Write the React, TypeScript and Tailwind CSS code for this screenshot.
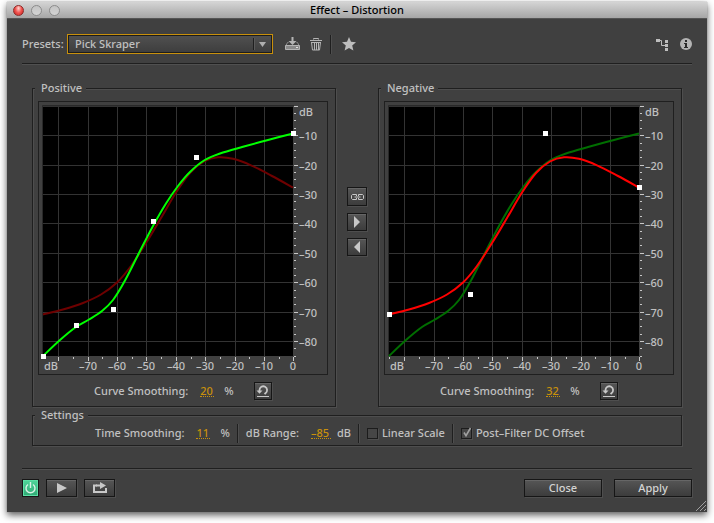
import React, { useState } from "react";

type Point = [number, number];

const PLOT = 250;
const RANGE = 85;

// curve samples and handles in plot units, origin at the top left
const GREEN_CURVE: Point[] = [
  [0, 250], [17, 234], [33, 221], [46, 213.5], [59, 205], [70, 194], [82, 174.5], [96, 147], [110, 120],
  [123, 97.5], [135, 80], [147, 66], [161, 54.5], [177, 47.5], [200, 40.8], [225, 34], [250, 27.5],
];
const RED_CURVE: Point[] = [
  [0, 208.5], [20, 203.5], [40, 197], [58, 188.5], [74, 176.5], [88, 160], [103, 137], [118, 112],
  [133, 86.5], [147, 67], [161, 55.5], [175, 51.3], [190, 52.8], [208, 59.3], [229, 70], [250, 81.5],
];
const POSITIVE_HANDLES: Point[] = [[0, 250], [33, 219], [70, 203], [110, 115], [153, 51], [250, 27]];
const NEGATIVE_HANDLES: Point[] = [[0, 208], [81, 188], [156, 27], [250, 81]];

const TENS = [10, 20, 30, 40, 50, 60, 70, 80];

const scale = (db: number) => (db * PLOT) / RANGE;
const xFor = (db: number) => Math.ceil(PLOT - scale(db));
const yFor = (db: number) => Math.floor(scale(db) + 0.25);

const smoothPath = (points: Point[]) => {
  let d = `M${points[0][0]} ${points[0][1]}`;
  for (let i = 0; i < points.length - 1; i++) {
    const p0 = points[i - 1] || points[i];
    const p1 = points[i];
    const p2 = points[i + 1];
    const p3 = points[i + 2] || p2;
    d += ` C${p1[0] + (p2[0] - p0[0]) / 6} ${p1[1] + (p2[1] - p0[1]) / 6} ${p2[0] - (p3[0] - p1[0]) / 6} ${
      p2[1] - (p3[1] - p1[1]) / 6
    } ${p2[0]} ${p2[1]}`;
  }
  return d;
};

interface CurveGraphProps {
  label: string;
  back: Point[];
  backColor: string;
  front: Point[];
  frontColor: string;
  handles: Point[];
}

const CurveGraph: React.FC<CurveGraphProps> = ({ label, back, backColor, front, frontColor, handles }) => {
  const yTicks = Array.from({ length: 35 }, (_, i) => i);
  const xTicks = Array.from({ length: 18 }, (_, i) => i);
  return (
    <svg viewBox="0 0 288 272" className="block w-full" role="img" aria-label={label}>
      <path d="M3.5 254V3.5H255" fill="none" stroke="#292929" />
      <g transform="translate(4 4)">
        <rect width={PLOT} height={PLOT} fill="#000" />
        <g stroke="#333" shapeRendering="crispEdges">
          <path d="M0 .5H250" />
          {TENS.map((t) => (
            <path key={t} d={`M${xFor(t) + 0.5} 0V250M0 ${yFor(t) + 0.5}H250`} />
          ))}
        </g>
        <g stroke="#c8c8c8" shapeRendering="crispEdges">
          {yTicks.map((i) => (
            <path key={i} d={`M251 ${yFor(i * 2.5) + 0.5}h${i % 4 ? 2 : 4}`} />
          ))}
          {xTicks.map((i) => (
            <path key={i} d={`M${xFor(i * 5) + 0.5} 251v${i % 2 ? 2 : 4}`} />
          ))}
        </g>
        <g fill="none" strokeWidth="2">
          <path d={smoothPath(back)} stroke={backColor} />
          <path d={smoothPath(front)} stroke={frontColor} />
        </g>
        <g fill="#fff" shapeRendering="crispEdges">
          {handles.map(([x, y]) => (
            <rect key={`${x}-${y}`} x={x - 2} y={y - 2} width="5" height="5" />
          ))}
        </g>
        <g fill="#c0c0c0" fontSize="11">
          <text x="256" y="10">dB</text>
          <text x="1" y="264">dB</text>
          <text x="250" y="264" textAnchor="middle">0</text>
          {TENS.map((t) => (
            <text key={t} x="256" y={yFor(t) + 5}>–{t}</text>
          ))}
          {TENS.slice(0, 7).map((t) => (
            <text key={t} x={xFor(t)} y="264" textAnchor="middle">–{t}</text>
          ))}
        </g>
      </g>
    </svg>
  );
};

const FRAME = "border border-[#1f1f1f] shadow-[1px_1px_0_#4e4e4e,inset_1px_1px_0_#4e4e4e]";
const LEGEND = "bg-[#404040] pr-1 pl-1.5 leading-[14px]";
const BUTTON =
  "flex items-center justify-center border border-[#161616] bg-linear-to-b from-[#565656] to-[#3c3c3c] shadow-[1px_1px_0_#4e4e4e,inset_0_1px_0_#666]";

interface ValueFieldProps {
  label: string;
  unit: string;
  initial: string;
  width: string;
}

const ValueField: React.FC<ValueFieldProps> = ({ label, unit, initial, width }) => {
  const [value, setValue] = useState(initial);
  return (
    <label className="flex items-center whitespace-nowrap">
      {label}
      <input
        type="text"
        className={`ml-3 h-3 border-b border-dotted border-[#c8900c] bg-transparent text-[#c8900c] outline-none ${width}`}
        value={value}
        onChange={(e) => setValue(e.target.value)}
      />
      <span className={unit === "%" ? "ml-2.5" : "ml-1.5"}>{unit}</span>
    </label>
  );
};

const CurvePanel: React.FC<CurveGraphProps & { smoothing: string }> = ({ smoothing, ...graph }) => (
  <fieldset className={`min-w-0 flex-1 pt-1.5 pr-[7px] pb-1.5 pl-[5px] ${FRAME}`}>
    <legend className={`-ml-[3px] ${LEGEND}`}>{graph.label}</legend>
    <div className="border border-[#1f1f1f]">
      <CurveGraph {...graph} />
    </div>
    <div className="mt-[7px] flex h-[18px] items-center justify-between pr-14 pl-14">
      <ValueField label="Curve Smoothing:" unit="%" initial={smoothing} width="w-3.5" />
      <button type="button" aria-label="Reset curve" className={`h-[18px] w-[18px] ${BUTTON}`}>
        <svg width="14" height="14" viewBox="0 0 14 14" fill="none" stroke="#c8c8c8">
          <path d="M3.5 7V6a3.8 3.8 0 1 1 6 3.2L8.5 10" strokeWidth="1.8" />
          <path d="M.5 6.5h6l-3 3.2z" fill="#c8c8c8" stroke="none" />
          <path d="M1 12.5h12" />
        </svg>
      </button>
    </div>
  </fieldset>
);

const CheckField: React.FC<{ label: string; initial: boolean }> = ({ label, initial }) => {
  const [checked, setChecked] = useState(initial);
  return (
    <label className="flex items-center gap-1 whitespace-nowrap">
      <span className="grid">
        <input
          type="checkbox"
          className="col-start-1 row-start-1 h-[11px] w-[11px] appearance-none border border-[#1c1c1c] bg-[#464646] shadow-[1px_1px_0_#4e4e4e]"
          checked={checked}
          onChange={(e) => setChecked(e.target.checked)}
        />
        {checked && (
          <svg width="11" height="11" viewBox="0 0 11 11" overflow="visible" className="pointer-events-none col-start-1 row-start-1">
            <path d="M3 4.5l2 3.2L9.5 0" fill="none" stroke="#a0a0a0" strokeWidth="1.6" />
          </svg>
        )}
      </span>
      {label}
    </label>
  );
};

const Divider = () => <div className="h-[19px] w-0.5 border-r border-l border-r-[#4e4e4e] border-l-[#1f1f1f]" />;

const Rule = () => <div className="h-0.5 border-t border-b border-t-[#1f1f1f] border-b-[#505050]" />;

const App: React.FC = () => {
  const [preset, setPreset] = useState("Pick Skraper");

  return (
    <div className="bg-white px-[7px] pt-0.5 pb-[11px] font-['Noto_Sans',sans-serif] text-[11px] leading-[14px] font-medium text-[#c0c0c0]">
      <div className="bg-[#404040] shadow-[0_0_1px_#888,0_3px_7px_rgba(0,0,0,0.65)]">
        <header className="grid h-[17px] grid-cols-[1fr_auto_1fr] items-center border-b border-[#555] bg-linear-to-b from-[#d4d4d4] to-[#a6a6a6] px-1.5">
          <div className="flex gap-[7px]">
            <button
              type="button"
              aria-label="Close window"
              className="h-[11px] w-[11px] rounded-full border border-[#8e2a28] bg-radial-[at_50%_25%] from-[#ffd4cf] via-[#f0524e] to-[#c42320]"
            />
            <button type="button" aria-label="Minimize" className="h-[11px] w-[11px] rounded-full border border-[#8c8c8c] bg-linear-to-b from-[#c4c4c4] to-[#d4d4d4]" />
            <button type="button" aria-label="Zoom" className="h-[11px] w-[11px] rounded-full border border-[#8c8c8c] bg-linear-to-b from-[#c4c4c4] to-[#d4d4d4]" />
          </div>
          <h1 className="text-black">Effect – Distortion</h1>
        </header>

        <main className="px-[15px] pt-[15px] pb-[15px]">
          <div className="flex h-5 items-center">
            <label htmlFor="presets" className="w-[45px]">Presets:</label>
            <div className="grid h-5 w-[206px] items-center border border-[#c8900c]">
              <select
                id="presets"
                className="col-start-1 row-start-1 h-[18px] w-full appearance-none border border-[#1c1c1c] bg-linear-to-b from-[#505050] to-[#3e3e3e] px-1.5 outline-none"
                value={preset}
                onChange={(e) => setPreset(e.target.value)}
              >
                <option>Pick Skraper</option>
              </select>
              <svg width="20" height="12" viewBox="0 0 20 12" className="pointer-events-none col-start-1 row-start-1 justify-self-end">
                <path d="M1.5 0V12" stroke="#1f1f1f" />
                <path d="M2.5 0V12" stroke="#5a5a5a" />
                <path d="M7 4h7l-3.5 5z" fill="#b0b0b0" />
              </svg>
            </div>
            <button type="button" aria-label="Save preset" className="ml-3">
              <svg width="15" height="14" viewBox="0 0 15 14">
                <path d="M6.5 0h2v4h3L7.5 8 3.5 4h3z" fill="#b4b4b4" />
                <path d="M3.5 5.5H2.5L1 8.5M11.5 5.5h1L14 8.5" fill="none" stroke="#8c8c8c" />
                <path d="M.5 8.5h14v4H.5z" fill="#8a8a8a" stroke="#b4b4b4" />
                <path d="M11 10.5h2" stroke="#e0e0e0" />
              </svg>
            </button>
            <button type="button" aria-label="Delete preset" className="ml-2.5">
              <svg width="12" height="14" viewBox="0 0 12 14" fill="none" stroke="#b4b4b4">
                <path d="M3.5 2.5v-1h5v1M0 3.5h12M1 5.5h10" />
                <path d="M1.5 5.5l1 7.500h7l1-7.500" />
                <path d="M4.5 6v7M6.500 6v7M8.500 6v7" />
              </svg>
            </button>
            <div className="mr-2.5 ml-2">
              <Divider />
            </div>
            <button type="button" aria-label="Favorite">
              <svg width="14" height="14" viewBox="0 0 14 14">
                <path d="M7 0l2 4.7 5 .5-3.8 3.3 1.2 5L7 10.9 2.6 13.5l1.2-5L0 5.2l5-.5z" fill="#bebebe" />
              </svg>
            </button>
            <button type="button" aria-label="Channel routing" className="ml-auto">
              <svg width="13" height="13" viewBox="0 0 13 13" fill="#bebebe">
                <path d="M0 1h4v3H0zM9 2h3v3H9zM9 6h3v3H9zM9 10h3v3H9z" />
                <path d="M4 2.5h1.5v5H9" fill="none" stroke="#bebebe" />
              </svg>
            </button>
            <button type="button" aria-label="Info" className="ml-[11px]">
              <svg width="12" height="12" viewBox="0 0 12 12">
                <circle cx="6" cy="6" r="6" fill="#b4b4b4" />
                <path d="M5 2h2v2H5zM4 5h3v4h1v1H4V9h1V6H4z" fill="#2a2a2a" />
              </svg>
            </button>
          </div>
          <div className="mt-[9px]">
            <Rule />
          </div>

          <div className="px-2.5 pt-4">
            <div className="flex">
              <CurvePanel
                label="Positive"
                back={RED_CURVE}
                backColor="#6e0000"
                front={GREEN_CURVE}
                frontColor="#00ff00"
                handles={POSITIVE_HANDLES}
                smoothing="20"
              />
              <div className="flex w-[42px] flex-col items-center gap-[7px] pt-[106px]">
                <button type="button" aria-label="Link graphs" className={`h-[19px] w-5 ${BUTTON}`}>
                  <svg width="13" height="6" viewBox="0 0 13 6" fill="none" stroke="#c8c8c8">
                    <path d="M5.5 2V.5h-4l-1 1v3l1 1h4V4M7.5 2V.5h4l1 1v3l-1 1h-4V4" />
                    <path d="M3.500 3h6" />
                  </svg>
                </button>
                <button type="button" aria-label="Copy positive to negative" className={`h-[18px] w-5 ${BUTTON}`}>
                  <svg width="6" height="12" viewBox="0 0 6 12">
                    <path d="M0 0l6 6-6 6z" fill="#c8c8c8" />
                  </svg>
                </button>
                <button type="button" aria-label="Copy negative to positive" className={`h-[18px] w-5 ${BUTTON}`}>
                  <svg width="6" height="12" viewBox="0 0 6 12">
                    <path d="M6 0L0 6l6 6z" fill="#c8c8c8" />
                  </svg>
                </button>
              </div>
              <CurvePanel
                label="Negative"
                back={GREEN_CURVE}
                backColor="#006e00"
                front={RED_CURVE}
                frontColor="#ff0000"
                handles={NEGATIVE_HANDLES}
                smoothing="32"
              />
            </div>

            <fieldset className={`mt-px pb-px ${FRAME}`}>
              <legend className={`ml-0.5 ${LEGEND}`}>Settings</legend>
              <div className="flex h-[22px] items-center gap-[7px] pl-[62px]">
                <ValueField label="Time Smoothing:" unit="%" initial="11" width="w-3.5" />
                <Divider />
                <ValueField label="dB Range:" unit="dB" initial="–85" width="w-5" />
                <Divider />
                <CheckField label="Linear Scale" initial={false} />
                <Divider />
                <CheckField label="Post–Filter DC Offset" initial={true} />
              </div>
            </fieldset>
          </div>

          <div className="mt-[22px]">
            <Rule />
          </div>
          <div className="mt-[9px] flex h-[18px]">
            <button
              type="button"
              aria-label="Power"
              className="flex w-[17px] items-center justify-center border border-[#161616] bg-linear-to-b from-[#4fd69a] to-[#2fa974] shadow-[inset_0_0_0_1px_#5be0a6]"
            >
              <svg width="11" height="12" viewBox="0 0 11 12" fill="none" stroke="#d8f2e6" strokeWidth="1.4">
                <path d="M3 2.5a4.5 4.5 0 1 0 5 0M5.5 0v6" />
              </svg>
            </button>
            <button type="button" aria-label="Play" className={`ml-[7px] w-[31px] ${BUTTON}`}>
              <svg width="10" height="10" viewBox="0 0 10 10">
                <path d="M0 0l10 5-10 5z" fill="#c8c8c8" />
              </svg>
            </button>
            <button type="button" aria-label="Loop" className={`ml-[7px] w-[31px] ${BUTTON}`}>
              <svg width="14" height="12" viewBox="0 0 14 12">
                <path d="M4 3.5H1V10h12V6" fill="none" stroke="#c8c8c8" strokeWidth="2" />
                <path d="M3 2.500h4V0l6 3.500L7 7V4.500H3z" fill="#c8c8c8" />
              </svg>
            </button>
            <button type="button" className={`ml-auto w-[78px] text-[#d4d4d4] ${BUTTON}`}>Close</button>
            <button type="button" className={`ml-3 w-[78px] text-[#d4d4d4] ${BUTTON}`}>Apply</button>
          </div>
        </main>
        <div className="relative">
          <svg width="10" height="10" viewBox="0 0 10 10" className="absolute right-px bottom-px">
            <path d="M0 10L10 0M4 10l6-6M8 10l2-2" stroke="#a0a0a0" />
          </svg>
        </div>
      </div>
    </div>
  );
};

export default App;
